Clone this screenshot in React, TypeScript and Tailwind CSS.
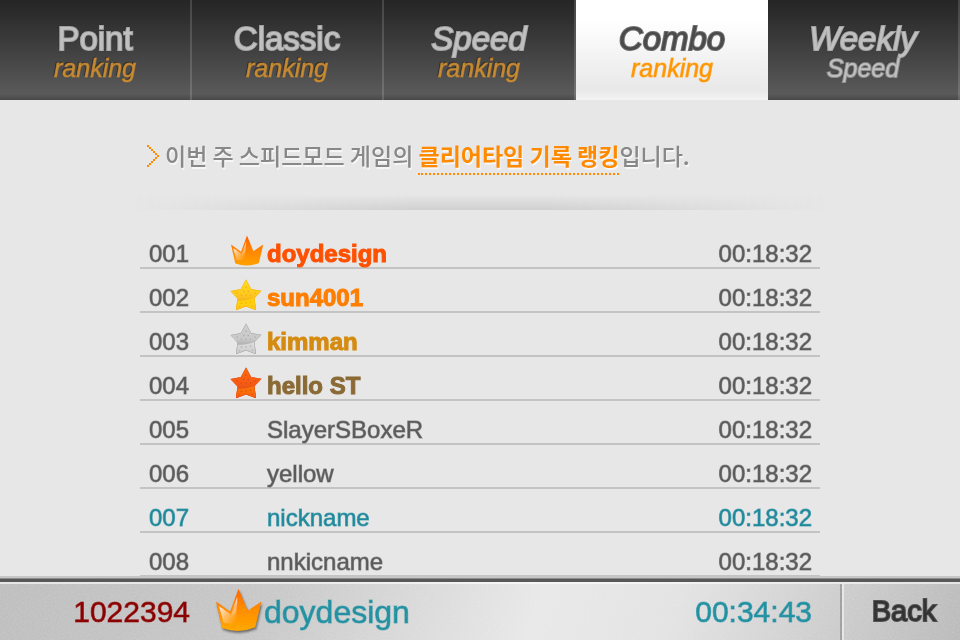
import React, { useState } from "react";

type Medal = "crown" | "gold" | "silver" | "bronze";

interface Tab {
  title: string;
  subtitle: string;
  titleClass: string;
  subtitleClass: string;
}

interface RankRow {
  rank: string;
  name: string;
  time: string;
  medal?: Medal;
  nameClass?: string;
  mine?: boolean;
}

const orangeSubtitle = "text-[#c78a32] [-webkit-text-stroke:1px_#c78a3299]";

const tabs: Tab[] = [
  { title: "Point", subtitle: "ranking", titleClass: "", subtitleClass: orangeSubtitle },
  { title: "Classic", subtitle: "ranking", titleClass: "", subtitleClass: orangeSubtitle },
  { title: "Speed", subtitle: "ranking", titleClass: "italic", subtitleClass: orangeSubtitle },
  { title: "Combo", subtitle: "ranking", titleClass: "italic", subtitleClass: orangeSubtitle },
  {
    title: "Weekly",
    subtitle: "Speed",
    titleClass: "italic",
    subtitleClass: "text-[#c0c0c0] [-webkit-text-stroke:2px_#c0c0c099]",
  },
];

const rows: RankRow[] = [
  { rank: "001", name: "doydesign", time: "00:18:32", medal: "crown", nameClass: "text-[#ff5000]" },
  { rank: "002", name: "sun4001", time: "00:18:32", medal: "gold", nameClass: "text-[#ff7e00]" },
  { rank: "003", name: "kimman", time: "00:18:32", medal: "silver", nameClass: "text-[#d58b10]" },
  { rank: "004", name: "hello ST", time: "00:18:32", medal: "bronze", nameClass: "text-[#8a6a35]" },
  { rank: "005", name: "SlayerSBoxeR", time: "00:18:32" },
  { rank: "006", name: "yellow", time: "00:18:32" },
  { rank: "007", name: "nickname", time: "00:18:32", mine: true },
  { rank: "008", name: "nnkicname", time: "00:18:32" },
];

const Crown: React.FC<{ id: string; className: string }> = ({ id, className }) => (
  <svg viewBox="0 0 140 134" className={className} aria-hidden="true">
    <defs>
      <linearGradient id={`${id}-fill`} x1="0" y1="0" x2="0" y2="1">
        <stop offset="0" stopColor="#ff5f00" />
        <stop offset="0.5" stopColor="#ff8500" />
        <stop offset="1" stopColor="#ffa200" />
      </linearGradient>
      <linearGradient
        id={`${id}-shine`}
        gradientUnits="userSpaceOnUse"
        x1="12"
        y1="60"
        x2="62"
        y2="98"
      >
        <stop offset="0" stopColor="#fff" stopOpacity="0.85" />
        <stop offset="0.45" stopColor="#fff" stopOpacity="0.4" />
        <stop offset="1" stopColor="#fff" stopOpacity="0" />
      </linearGradient>
      <linearGradient id={`${id}-spike`} x1="0" y1="0" x2="0" y2="1">
        <stop offset="0" stopColor="#fff" stopOpacity="0.8" />
        <stop offset="1" stopColor="#fff" stopOpacity="0" />
      </linearGradient>
    </defs>
    <path
      d="M3 40 L45 70 L70 2 L97 68 L138 40 L120 117 Q70 138 21 119 Z"
      fill={`url(#${id}-fill)`}
    />
    <path d="M12 54 L47 78 L64 58 V110 Q44 106 26 104 Z" fill={`url(#${id}-shine)`} />
    <path d="M48 77 L66 27 Q69 58 54 88 Z" fill={`url(#${id}-spike)`} />
  </svg>
);

const starColors = {
  gold: { top: "#ffe01a", mid: "#ffc81f", low: "#ffd600", edge: "#f5b01c", dot: "#e08f0c" },
  silver: { top: "#cfcfcf", mid: "#cacaca", low: "#dedede", edge: "#a8a8a8", dot: "#8e8e8e" },
  bronze: { top: "#ff6a10", mid: "#f65c14", low: "#ff7c00", edge: "#e5501a", dot: "#b93c10" },
};

const dots = [
  [49, 25], [42, 38], [56, 38], [22, 43], [35, 49], [49, 49], [63, 49], [77, 43],
  [35, 74], [49, 73], [63, 71], [29, 85], [69, 83],
];

const Star: React.FC<{ kind: "gold" | "silver" | "bronze" }> = ({ kind }) => {
  const c = starColors[kind];
  const shape = "M49 1 L65 31 L97 36 L75 59 L80 96 L49 84 L18 96 L23 60 L1 37 L33 31 Z";
  return (
    <svg viewBox="0 0 98 98" className="h-8 w-8" aria-hidden="true">
      <defs>
        <linearGradient id={`${kind}-top`} x1="0" y1="0" x2="0" y2="1">
          <stop offset="0" stopColor={c.top} />
          <stop offset="0.5" stopColor={c.mid} />
          <stop offset="0.72" stopColor={c.edge} />
        </linearGradient>
        <linearGradient id={`${kind}-low`} x1="0" y1="0" x2="0" y2="1">
          <stop offset="0" stopColor={c.low} />
          <stop offset="1" stopColor={c.mid} />
        </linearGradient>
        <clipPath id={`${kind}-clip`}>
          <path d={shape} />
        </clipPath>
      </defs>
      <g clipPath={`url(#${kind}-clip)`}>
        <rect width="98" height="98" fill={`url(#${kind}-top)`} />
        <path d="M14 66 Q54 70 84 54 V98 H10 Z" fill={`url(#${kind}-low)`} />
        {dots.map(([x, y]) => (
          <circle key={`${x}-${y}`} cx={x} cy={y} r="2.6" fill={c.dot} opacity="0.4" />
        ))}
        <path d={shape} fill="none" stroke={c.edge} strokeWidth="3" strokeLinejoin="round" />
      </g>
    </svg>
  );
};

const MedalIcon: React.FC<{ medal: Medal }> = ({ medal }) => {
  if (medal === "crown") {
    return <Crown id="row-crown" className="h-8 w-[34px]" />;
  }
  return <Star kind={medal} />;
};

const TabBar: React.FC<{ active: number; onSelect: (index: number) => void }> = ({
  active,
  onSelect,
}) => (
  <nav className="grid h-[100px] shrink-0 grid-cols-5">
    {tabs.map((tab, index) => {
      const isActive = index === active;
      return (
        <button
          key={tab.title}
          type="button"
          aria-pressed={isActive}
          onClick={() => onSelect(index)}
          className={
            isActive
              ? "flex flex-col items-center bg-linear-to-b from-white from-20% via-[#e8e8e8] via-90% to-[#f4f4f4] pt-5"
              : "flex flex-col items-center border-r-2 border-white/15 bg-linear-to-b from-[#252525] via-[#5a5a5a] via-94% to-[#484848] bg-origin-border pt-5 [text-shadow:-1px_-1px_1px_#00000080]"
          }
        >
          <span
            className={`text-[33px] leading-[38px] ${tab.titleClass} ${
              isActive
                ? "text-[#4b4b4b] [-webkit-text-stroke:2px_#4b4b4bcc]"
                : "text-[#c0c0c0] [-webkit-text-stroke:2px_#c0c0c0cc]"
            }`}
          >
            {tab.title}
          </span>
          <span
            className={`text-[25px] leading-5 italic ${
              isActive ? "text-[#ff9600] [-webkit-text-stroke:1px_#ff960099]" : tab.subtitleClass
            }`}
          >
            {tab.subtitle}
          </span>
        </button>
      );
    })}
  </nav>
);

const Notice: React.FC = () => (
  <div className="flex h-[110px] items-start pt-[39px] pl-[7px]">
    <svg
      viewBox="0 0 12 22"
      className="mt-1.5 mr-1.5 h-[22px] w-3"
      shapeRendering="crispEdges"
      aria-hidden="true"
    >
      {[0, 1, 2, 3, 4, 5, 6, 7, 8, 9, 10].map((i) => (
        <rect
          key={i}
          x={i < 6 ? i * 2 : (10 - i) * 2}
          y={i * 2}
          width="2"
          height="2"
          fill="#ff8a00"
        />
      ))}
    </svg>
    <p className="font-['Noto_Sans_CJK_KR',sans-serif] text-[23px] leading-8 font-medium text-[#888888] [text-shadow:1px_2px_0_#f6f6f6]">
      이번 주 스피드모드 게임의{" "}
      <strong className="inline-block h-9 border-b-2 border-dotted border-[#ff8a00] font-bold text-[#ff8a00]">
        클리어타임 기록 랭킹
      </strong>
      입니다.
    </p>
  </div>
);

const RankTable: React.FC = () => (
  <table className="w-full border-separate border-spacing-0 text-2xl leading-6">
    <tbody>
      {rows.map((row) => {
        const color = row.mine
          ? "text-[#208a9c] [-webkit-text-stroke:1px_#208a9c99]"
          : "text-[#5c5c5c] [-webkit-text-stroke:1px_#5c5c5c99]";
        return (
          <tr
            key={row.rank}
            className={`h-11 align-top *:border-b-2 *:border-[#c3c3c3] ${color}`}
          >
            <td className="w-[90px] pt-[17px] pl-[9px]">{row.rank}</td>
            <td className="w-[37px] pt-[10px]">{row.medal && <MedalIcon medal={row.medal} />}</td>
            <td
              className={
                row.nameClass
                  ? `pt-[17px] font-bold [-webkit-text-stroke:1px] ${row.nameClass}`
                  : "pt-[17px]"
              }
            >
              {row.name}
            </td>
            <td className="pt-[17px] pr-2 text-right">{row.time}</td>
          </tr>
        );
      })}
    </tbody>
  </table>
);

const StatusBar: React.FC = () => (
  <footer className="relative shrink-0 border-t-[3px] border-[#585858] bg-[#c8c8c8] shadow-[0_-1px_0_#8c8c8c,0_-3px_0_#c6c6c6]">
    <div className="flex h-[58px] items-stretch border-t-2 border-white/60 bg-[linear-gradient(110deg,#bcbcbc,#c6c6c6_28%,#e8e8e8_56%,#e2e2e2_70%,#b8b8b8)]">
      <div className="flex flex-1 items-center text-3xl">
        <span className="w-[190px] text-right text-[#840000] [-webkit-text-stroke:1px_#84000099]">
          1022394
        </span>
        <Crown
          id="my-crown"
          className="mb-1 ml-[25px] h-[45px] w-[47px] drop-shadow-[1px_2px_1px_#00000080]"
        />
        <span className="ml-0.5 flex-1 text-[32px] text-[#208a9c] [-webkit-text-stroke:1px_#208a9c99]">
          doydesign
        </span>
        <span className="pr-7 text-[#208a9c] [-webkit-text-stroke:1px_#208a9c99]">00:34:43</span>
      </div>
      <button
        type="button"
        className="w-[120px] border-l-2 border-[#9c9c9c] pl-1.5 text-[29px] text-[#303030] shadow-[inset_2px_0_0_#ffffff80] [-webkit-text-stroke:2px_#303030cc]"
      >
        Back
      </button>
    </div>
    {/* brushed grain over the bar */}
    <svg
      className="pointer-events-none absolute inset-0 h-full w-full opacity-30 mix-blend-overlay"
      aria-hidden="true"
    >
      <filter id="grain">
        <feTurbulence type="fractalNoise" baseFrequency="0.6" numOctaves="2" />
        <feColorMatrix type="saturate" values="0" />
      </filter>
      <rect width="100%" height="100%" filter="url(#grain)" />
    </svg>
  </footer>
);

const App: React.FC = () => {
  const [active, setActive] = useState(3);

  return (
    <div className="flex min-h-screen flex-col bg-[#e7e7e7] font-['Liberation_Sans',Arial,sans-serif]">
      <TabBar active={active} onSelect={setActive} />
      <main className="flex-1">
        <div className="mx-auto w-full max-w-[680px]">
          <Notice />
          <div className="-mx-2 -mt-4 mb-[15px] h-4 bg-linear-to-t from-[#d0d0d0] to-[#e7e7e7] [mask-image:linear-gradient(to_right,transparent,black_40%,black_60%,transparent)]" />
          <RankTable />
        </div>
      </main>
      <StatusBar />
    </div>
  );
};

export default App;
